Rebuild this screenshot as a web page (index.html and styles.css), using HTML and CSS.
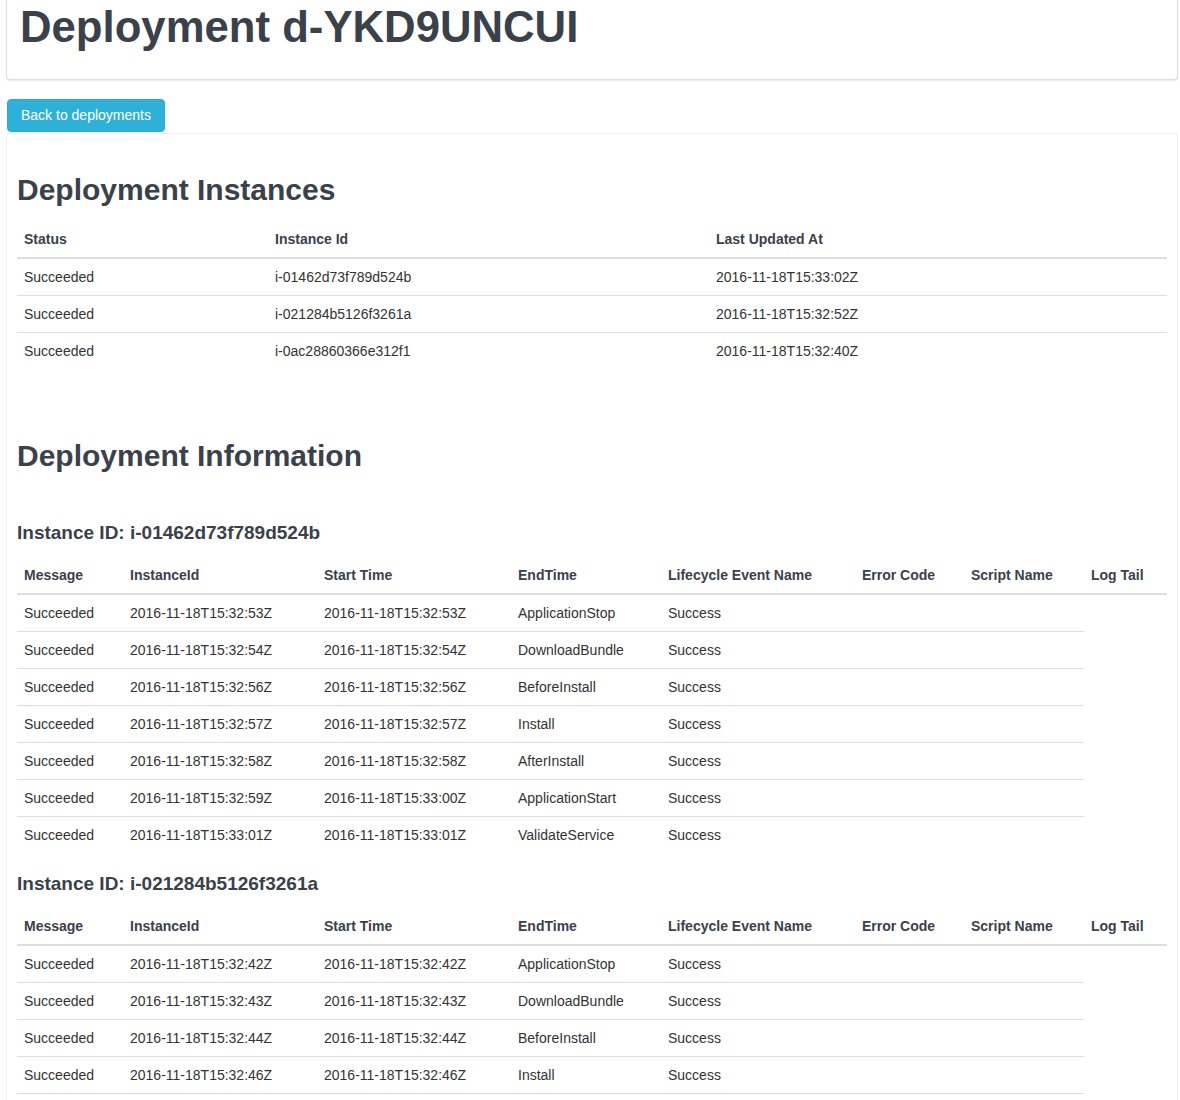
FILE: index.html
```html
<!DOCTYPE html>
<html lang="en">
<head>
<meta charset="utf-8">
<title>Deployment d-YKD9UNCUI</title>
<link rel="stylesheet" href="styles.css">
</head>
<body>
<div class="page">
  <header class="card top-card">
    <h1>Deployment d-YKD9UNCUI</h1>
  </header>
  <div class="actions">
    <a class="btn btn-info" href="#">Back to deployments</a>
  </div>
  <section class="card content-card">
    <h2>Deployment Instances</h2>
    <table class="table">
      <colgroup>
        <col class="c-status">
        <col class="c-instance">
        <col>
      </colgroup>
      <thead>
        <tr><th>Status</th><th>Instance Id</th><th>Last Updated At</th></tr>
      </thead>
      <tbody>
        <tr><td>Succeeded</td><td>i-01462d73f789d524b</td><td>2016-11-18T15:33:02Z</td></tr>
        <tr><td>Succeeded</td><td>i-021284b5126f3261a</td><td>2016-11-18T15:32:52Z</td></tr>
        <tr><td>Succeeded</td><td>i-0ac28860366e312f1</td><td>2016-11-18T15:32:40Z</td></tr>
      </tbody>
    </table>

    <h2 class="info-title">Deployment Information</h2>

    <h4>Instance ID: i-01462d73f789d524b</h4>
    <table class="table">
      <colgroup>
        <col class="c-msg"><col class="c-time"><col class="c-time"><col class="c-end"><col class="c-time"><col class="c-err"><col class="c-script"><col>
      </colgroup>
      <thead>
        <tr><th>Message</th><th>InstanceId</th><th>Start Time</th><th>EndTime</th><th>Lifecycle Event Name</th><th>Error Code</th><th>Script Name</th><th>Log Tail</th></tr>
      </thead>
      <tbody>
        <tr><td>Succeeded</td><td>2016-11-18T15:32:53Z</td><td>2016-11-18T15:32:53Z</td><td>ApplicationStop</td><td>Success</td><td></td><td></td></tr>
        <tr><td>Succeeded</td><td>2016-11-18T15:32:54Z</td><td>2016-11-18T15:32:54Z</td><td>DownloadBundle</td><td>Success</td><td></td><td></td></tr>
        <tr><td>Succeeded</td><td>2016-11-18T15:32:56Z</td><td>2016-11-18T15:32:56Z</td><td>BeforeInstall</td><td>Success</td><td></td><td></td></tr>
        <tr><td>Succeeded</td><td>2016-11-18T15:32:57Z</td><td>2016-11-18T15:32:57Z</td><td>Install</td><td>Success</td><td></td><td></td></tr>
        <tr><td>Succeeded</td><td>2016-11-18T15:32:58Z</td><td>2016-11-18T15:32:58Z</td><td>AfterInstall</td><td>Success</td><td></td><td></td></tr>
        <tr><td>Succeeded</td><td>2016-11-18T15:32:59Z</td><td>2016-11-18T15:33:00Z</td><td>ApplicationStart</td><td>Success</td><td></td><td></td></tr>
        <tr><td>Succeeded</td><td>2016-11-18T15:33:01Z</td><td>2016-11-18T15:33:01Z</td><td>ValidateService</td><td>Success</td><td></td><td></td></tr>
      </tbody>
    </table>

    <h4>Instance ID: i-021284b5126f3261a</h4>
    <table class="table">
      <colgroup>
        <col class="c-msg"><col class="c-time"><col class="c-time"><col class="c-end"><col class="c-time"><col class="c-err"><col class="c-script"><col>
      </colgroup>
      <thead>
        <tr><th>Message</th><th>InstanceId</th><th>Start Time</th><th>EndTime</th><th>Lifecycle Event Name</th><th>Error Code</th><th>Script Name</th><th>Log Tail</th></tr>
      </thead>
      <tbody>
        <tr><td>Succeeded</td><td>2016-11-18T15:32:42Z</td><td>2016-11-18T15:32:42Z</td><td>ApplicationStop</td><td>Success</td><td></td><td></td></tr>
        <tr><td>Succeeded</td><td>2016-11-18T15:32:43Z</td><td>2016-11-18T15:32:43Z</td><td>DownloadBundle</td><td>Success</td><td></td><td></td></tr>
        <tr><td>Succeeded</td><td>2016-11-18T15:32:44Z</td><td>2016-11-18T15:32:44Z</td><td>BeforeInstall</td><td>Success</td><td></td><td></td></tr>
        <tr><td>Succeeded</td><td>2016-11-18T15:32:46Z</td><td>2016-11-18T15:32:46Z</td><td>Install</td><td>Success</td><td></td><td></td></tr>
        <tr><td>Succeeded</td><td>2016-11-18T15:32:47Z</td><td>2016-11-18T15:32:47Z</td><td>AfterInstall</td><td>Success</td><td></td><td></td></tr>
        <tr><td>Succeeded</td><td>2016-11-18T15:32:48Z</td><td>2016-11-18T15:32:49Z</td><td>ApplicationStart</td><td>Success</td><td></td><td></td></tr>
        <tr><td>Succeeded</td><td>2016-11-18T15:32:50Z</td><td>2016-11-18T15:32:50Z</td><td>ValidateService</td><td>Success</td><td></td><td></td></tr>
      </tbody>
    </table>
  </section>
</div>
</body>
</html>
```

FILE: styles.css
```css
* {
  box-sizing: border-box;
}

html, body {
  margin: 0;
  padding: 0;
  background: #ffffff;
}

body {
  font-family: "Liberation Sans", Arial, Helvetica, sans-serif;
  font-size: 14px;
  line-height: 20px;
  color: #333333;
}

.page {
  padding: 0 2px 0 6px;
}

.card {
  background: #ffffff;
  border-radius: 0 0 4px 4px;
}

.top-card {
  border: 1px solid #dedede;
  border-top: none;
  box-shadow: 0 1px 2px rgba(0, 0, 0, 0.08);
  padding: 3px 10px 28px 13px;
}

h1, h2, h4 {
  font-weight: bold;
  color: #3a414b;
  line-height: 1.1;
}

h1 {
  margin: 0;
  font-size: 43.7px;
}

.actions {
  display: flex;
  margin-top: 19px;
  margin-bottom: 1px;
}

.btn {
  display: inline-block;
  margin-left: 1px;
  padding: 6px 13px;
  border: 1px solid #2aaad4;
  border-radius: 4px;
  line-height: 19px;
  font-size: 14px;
  color: #ffffff;
  text-decoration: none;
}

.btn-info {
  background: #2fb0d9;
}

.content-card {
  border: 1px solid #f1f1f1;
  border-radius: 4px;
  padding: 19px 10px 0 10px;
}

h2 {
  font-size: 30px;
  margin: 20px 0 15px;
}

.info-title {
  margin-top: 70px;
  margin-bottom: 51px;
}

h4 {
  font-size: 19px;
  margin: 21px 0 13px;
}

.table {
  width: 100%;
  table-layout: fixed;
  border-collapse: collapse;
  border-spacing: 0;
  margin-bottom: 20px;
}

.table th,
.table td {
  padding: 8px 8px 8px 7px;
  text-align: left;
  vertical-align: top;
  line-height: 20px;
  white-space: nowrap;
}

.table th {
  color: #3a414b;
  font-weight: bold;
  border-bottom: 2px solid #dddddd;
}

.table td {
  border-top: 1px solid #dddddd;
  color: #333333;
}

.c-status { width: 251px; }
.c-instance { width: 441px; }

.c-msg { width: 106px; }
.c-time { width: 194px; }
.c-end { width: 150px; }
.c-err { width: 109px; }
.c-script { width: 120px; }
```
